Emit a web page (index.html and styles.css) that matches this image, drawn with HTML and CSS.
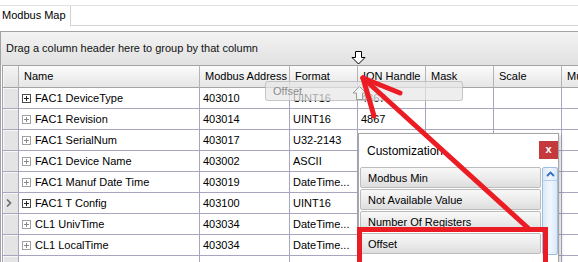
FILE: index.html
```html
<!DOCTYPE html>
<html lang="en">
<head>
    <meta charset="UTF-8">
    <title>Modbus Map</title>
    <link rel="stylesheet" href="styles.css">
</head>
<body>
    <div class="tabs">
        <div class="tab">Modbus Map</div>
        <div class="tab-rest"></div>
    </div>

    <div class="grid">
        <div class="group-panel">Drag a column header here to group by that column</div>

        <div class="row head">
            <div class="cell ind"></div>
            <div class="cell">Name</div>
            <div class="cell">Modbus Address</div>
            <div class="cell">Format</div>
            <div class="cell">ION Handle</div>
            <div class="cell">Mask</div>
            <div class="cell">Scale</div>
            <div class="cell">Mu</div>
        </div>

        <div class="row">
            <div class="cell ind"></div>
            <div class="cell name"><span class="plus dark"></span>FAC1 DeviceType</div>
            <div class="cell">403010</div>
            <div class="cell">UINT16</div>
            <div class="cell">4867</div>
            <div class="cell"></div><div class="cell"></div><div class="cell"></div>
        </div>
        <div class="row">
            <div class="cell ind"></div>
            <div class="cell name"><span class="plus"></span>FAC1 Revision</div>
            <div class="cell">403014</div>
            <div class="cell">UINT16</div>
            <div class="cell">4867</div>
            <div class="cell"></div><div class="cell"></div><div class="cell"></div>
        </div>
        <div class="row">
            <div class="cell ind"></div>
            <div class="cell name"><span class="plus"></span>FAC1 SerialNum</div>
            <div class="cell">403017</div>
            <div class="cell">U32-2143</div>
            <div class="cell"></div><div class="cell"></div><div class="cell"></div><div class="cell"></div>
        </div>
        <div class="row">
            <div class="cell ind"></div>
            <div class="cell name"><span class="plus"></span>FAC1 Device Name</div>
            <div class="cell">403002</div>
            <div class="cell">ASCII</div>
            <div class="cell"></div><div class="cell"></div><div class="cell"></div><div class="cell"></div>
        </div>
        <div class="row">
            <div class="cell ind"></div>
            <div class="cell name"><span class="plus"></span>FAC1 Manuf Date Time</div>
            <div class="cell">403019</div>
            <div class="cell">DateTime...</div>
            <div class="cell"></div><div class="cell"></div><div class="cell"></div><div class="cell"></div>
        </div>
        <div class="row">
            <div class="cell ind">
                <svg width="6" height="8" viewBox="0 0 6 8"><path d="M1 0.5 L4.5 4 L1 7.5" fill="none" stroke="#6a6a6a" stroke-width="1.6"/></svg>
            </div>
            <div class="cell name"><span class="plus dark"></span>FAC1 T Config</div>
            <div class="cell">403100</div>
            <div class="cell">UINT16</div>
            <div class="cell"></div><div class="cell"></div><div class="cell"></div><div class="cell"></div>
        </div>
        <div class="row">
            <div class="cell ind"></div>
            <div class="cell name"><span class="plus"></span>CL1 UnivTime</div>
            <div class="cell">403034</div>
            <div class="cell">DateTime...</div>
            <div class="cell"></div><div class="cell"></div><div class="cell"></div><div class="cell"></div>
        </div>
        <div class="row">
            <div class="cell ind"></div>
            <div class="cell name"><span class="plus"></span>CL1 LocalTime</div>
            <div class="cell">403034</div>
            <div class="cell">DateTime...</div>
            <div class="cell"></div><div class="cell"></div><div class="cell"></div><div class="cell"></div>
        </div>
        <div class="row">
            <div class="cell ind"></div>
            <div class="cell name"><span class="plus"></span></div>
            <div class="cell"></div>
            <div class="cell"></div>
            <div class="cell"></div><div class="cell"></div><div class="cell"></div><div class="cell"></div>
        </div>
    </div>

    <!-- column being dragged out of the header -->
    <svg class="drop-arrow" width="15" height="14" viewBox="0 0 15 14">
        <path d="M4.5 0.5 H10.5 V6.5 H14 L7.5 13 L1 6.5 H4.5 Z" fill="#fff" stroke="#000"/>
    </svg>
    <div class="drag-ghost">
        <span>Offset</span>
        <svg class="up-arrow" width="15" height="14" viewBox="0 0 15 14">
            <path d="M7.5 0.5 L14 7 H10.5 V13.5 H4.5 V7 H1 Z" fill="#f4f4f4" stroke="#9a9a9a"/>
        </svg>
    </div>

    <div class="custom-box">
        <div class="custom-title">
            <span>Customization</span>
            <a href="#" class="custom-close">x</a>
        </div>
        <div class="custom-body">
            <div class="custom-list">
                <div class="custom-item">Modbus Min</div>
                <div class="custom-item">Not Available Value</div>
                <div class="custom-item">Number Of Registers</div>
                <div class="custom-item">Offset</div>
            </div>
            <div class="scroll">
                <div class="scroll-up">
                    <svg width="9" height="6" viewBox="0 0 9 6"><path d="M1 5 L4.5 1.5 L8 5" fill="none" stroke="#2f6fc4" stroke-width="1.8"/></svg>
                </div>
            </div>
        </div>
    </div>

    <div class="mark-box"></div>
    <svg class="mark-arrow" width="578" height="262" viewBox="0 0 578 262">
        <g stroke="#ec1c24" stroke-width="5" fill="none" stroke-linecap="round">
            <line x1="528" y1="228" x2="363" y2="78"/>
            <line x1="363" y1="78" x2="400" y2="93"/>
            <line x1="363" y1="78" x2="374" y2="116"/>
        </g>
    </svg>
</body>
</html>
```

FILE: styles.css
```css
*{
    margin: 0;
    padding: 0;
    box-sizing: border-box;
}

body{
    font-family: "Liberation Sans", Arial, sans-serif;
    font-size: 11px;
    color: #000;
    background-color: #fff;
    width: 578px;
    height: 262px;
    overflow: hidden;
    position: relative;
}

/* tab strip */
.tabs{
    display: flex;
    margin-top: 5px;
    height: 21px;
    border-top: 1px solid #e2e2e2;
}

.tab{
    width: 71px;
    padding-left: 2px;
    line-height: 19px;
    border-right: 1px solid #d2d2d2;
}

.tab-rest{
    flex: 1;
    border-bottom: 1px solid #d2d2d2;
}

/* grid */
.grid{
    margin-top: 5px;
    width: 578px;
    overflow: hidden;
    border-top: 1px solid #a3a3a3;
    border-left: 1px solid #a3a3a3;
}

.group-panel{
    height: 33px;
    line-height: 33px;
    padding-left: 5px;
    background: linear-gradient(#f3f3f3, #e1e1e1);
    color: #111;
}

.row{
    display: grid;
    grid-template-columns: 17px 181px 90px 68px 68px 68px 68px 80px;
    margin-left: 1px;
    height: 21px;
}

.cell{
    border-right: 1px solid #a8a5be;
    border-bottom: 1px solid #a8a5be;
    padding-left: 3px;
    line-height: 20px;
    white-space: nowrap;
    overflow: hidden;
}

.row .ind{
    border-left: 1px solid #a8a5be;
    background-color: #e4e4e4;
    box-shadow: inset 1px 1px #f7f7f7;
    padding-left: 3px;
    display: flex;
    align-items: center;
}

.row.head{
    height: 23px;
}

.head .cell{
    border-top: 1px solid #a3a3a3;
    border-bottom: 1px solid #a3a3a3;
    border-right-color: #b4b4b4;
    background: linear-gradient(#fbfbfb, #e6e6e6);
    line-height: 21px;
    padding-left: 5px;
}

.head .ind{
    border-left-color: #a3a3a3;
    background: linear-gradient(#f4f4f4, #e2e2e2);
}

.name{
    display: flex;
    align-items: center;
}

.plus{
    position: relative;
    width: 9px;
    height: 9px;
    margin-right: 4px;
    border: 1px solid #a0a0a0;
    background-color: #fff;
}

.plus::before,
.plus::after{
    content: "";
    position: absolute;
    background-color: #8a8a8a;
}

.plus::before{
    left: 1px;
    top: 3px;
    width: 5px;
    height: 1px;
}

.plus::after{
    left: 3px;
    top: 1px;
    width: 1px;
    height: 5px;
}

.plus.dark{
    border-color: #4a4a4a;
}

.plus.dark::before,
.plus.dark::after{
    background-color: #222;
}

/* drag feedback */
.drop-arrow{
    position: absolute;
    left: 351px;
    top: 51px;
}

.drag-ghost{
    position: absolute;
    left: 265px;
    top: 81px;
    width: 198px;
    height: 20px;
    border: 1px solid rgba(150, 150, 150, .45);
    border-radius: 3px;
    background-color: rgba(232, 232, 232, .72);
    color: #8c8c8c;
    padding-left: 7px;
    line-height: 18px;
}

.up-arrow{
    position: absolute;
    left: 86px;
    top: 4px;
}

/* customization window */
.custom-box{
    position: absolute;
    left: 358px;
    top: 133px;
    width: 201px;
    height: 140px;
    background-color: #fff;
    border: 1px solid #a5a5a5;
    box-shadow: 2px 2px 4px rgba(0,0,0,.18);
}

.custom-title{
    display: flex;
    justify-content: space-between;
    align-items: flex-start;
    height: 32px;
    padding-left: 8px;
    font-size: 12px;
}

.custom-title span{
    margin-top: 10px;
}

.custom-close{
    margin-top: 7px;
    width: 19px;
    height: 18px;
    background-color: #c4393d;
    color: #fff;
    text-decoration: none;
    font-weight: bold;
    font-size: 11px;
    text-align: center;
    line-height: 16px;
}

.custom-body{
    display: flex;
    padding-left: 1px;
}

.custom-list{
    width: 182px;
    padding-top: 1px;
}

.custom-item{
    height: 21px;
    margin-bottom: 1px;
    padding-left: 7px;
    line-height: 20px;
    border: 1px solid #bcbcbc;
    border-radius: 2px;
    background: linear-gradient(#f8f8f8 0%, #ececec 50%, #dedede 100%);
}

.scroll{
    width: 16px;
    margin-left: 1px;
    margin-top: 1px;
    border: 1px solid #9cbde4;
    border-radius: 2px;
    background: linear-gradient(90deg, #dbe8f7, #f1f6fd 50%, #dbe8f7);
}

.scroll-up{
    height: 13px;
    display: flex;
    justify-content: center;
    align-items: center;
    border-bottom: 1px solid #b7d0ee;
}

/* red markup on top */
.mark-box{
    position: absolute;
    left: 357px;
    top: 227px;
    width: 191px;
    height: 50px;
    border: 5px solid #ec1c24;
}

.mark-arrow{
    position: absolute;
    left: 0;
    top: 0;
}
```
